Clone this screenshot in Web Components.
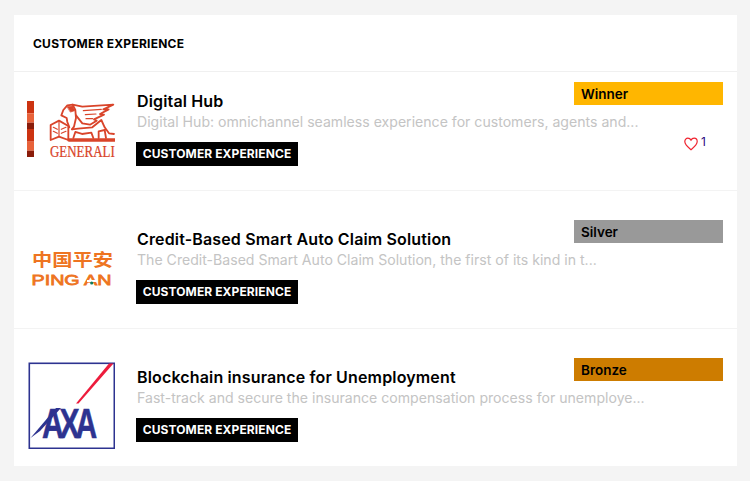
<!DOCTYPE html>
<html><head><meta charset="utf-8"><style>
html,body{margin:0;padding:0;background:#f4f4f4}
body{padding:15px 13px 15px 14px;font-family:Inter,"Liberation Sans",sans-serif}
</style></head><body>
<template id="t-card"><style>
:host{display:block;background:#fff;width:723px}
header{height:57px;box-sizing:border-box;padding:21px 0 0 19px;font:700 12px/16px Inter,"Liberation Sans",sans-serif;letter-spacing:.02em;color:#000;border-bottom:1px solid #f0f0f0}
</style><header><slot name="title"></slot></header><slot></slot></template>

<template id="t-row"><style>
:host{display:flex;position:relative;box-sizing:border-box;height:138px;padding:32px 14px 17px 13px;gap:22px;border-bottom:1px solid #f3f3f3;color:#000}
:host([first]){height:119px;padding-top:13px}
:host([last]){border-bottom:0;height:137px}
.logo{flex:0 0 88px;height:88px}
.body{flex:1;min-width:0;padding-top:6px}
h3{margin:0 0 1px;font:600 16px/20px Inter,"Liberation Sans",sans-serif;letter-spacing:.15px;white-space:nowrap}
p{margin:0 0 10px;font:400 14.1px/20px Inter,"Liberation Sans",sans-serif;color:#c4c4c4;white-space:nowrap;overflow:hidden;height:20px}
.tag{display:inline-block;margin-left:-1px;background:#000;color:#fff;font:700 12px/24px Inter,"Liberation Sans",sans-serif;letter-spacing:.1px;width:162px;height:24px;text-align:center}
.badge{position:absolute;top:10px;right:14px;width:149px;height:23px;box-sizing:border-box;padding-left:7px;font:600 13.5px/24px Inter,"Liberation Sans",sans-serif;background:var(--bc,#ccc)}
:host(:not([first])) .badge{top:29px}
</style><div class="logo"><slot name="logo"></slot></div><div class="body"><h3><slot name="name"></slot></h3><p><slot name="desc"></slot></p><span class="tag"><slot name="tag"></slot></span></div><div class="badge"><slot name="badge"></slot></div><slot name="extra"></slot></template>

<template id="t-like"><style>
:host{position:absolute;left:670px;top:63px;display:flex;align-items:flex-start;gap:3px;color:#2a0a80;font:400 12px/14px Inter,"Liberation Sans",sans-serif}
svg{display:block;margin-top:2px}
</style><svg width="14" height="14" viewBox="0 0 14 14"><path d="M7 12.7C4.4 10.6.8 8 .8 4.6.8 2.6 2.2 1.2 3.9 1.2 5.3 1.2 6.4 2 7 3.1 7.6 2 8.7 1.2 10.1 1.2 11.8 1.2 13.2 2.6 13.2 4.6 13.2 8 9.6 10.6 7 12.7Z" fill="none" stroke="#f0232f" stroke-width="1.2"/></svg><span><slot></slot></span></template>

<aw-card>
<span slot="title">CUSTOMER EXPERIENCE</span>

<aw-row first style="--bc:#ffb600">
<svg slot="logo" width="88" height="88" viewBox="0 0 88 88" style="display:block">
<rect x="0" y="16" width="7" height="12.3" fill="#cc3311"/><rect x="0" y="28.3" width="7" height="9.4" fill="#e8623a"/><rect x="0" y="37.7" width="7" height="6.3" fill="#8a1c0a"/><rect x="0" y="44" width="7" height="12.7" fill="#cc3311"/><rect x="0" y="56.7" width="7" height="9" fill="#e8623a"/><rect x="0" y="65.7" width="7" height="6.3" fill="#8a1c0a"/>
<g transform="translate(-13 5) scale(.3333)" fill="none" stroke="#d9442a" stroke-width="5.5" stroke-linejoin="round" stroke-linecap="round">
<path d="M110 105L135 92 163 108V150L135 140 110 150Z"/><path d="M135 94V140M118 112L130 118M118 124L130 130M142 118L156 112M142 130L156 124" stroke-width="3.5"/>
<path d="M148 60L160 46 176 44 184 60 186 84 180 110 174 118M148 60L142 76 158 84 160 96 166 112" />
<path d="M160 50L176 48 182 62 170 66Z" fill="#d9442a" stroke-width="2"/>
<path d="M176 44L205 50 298 44 268 58 284 58 258 72 270 74 240 88 248 92 228 104 205 100 186 76"/>
<path d="M208 62L262 58M214 74L246 72M216 86L236 86" stroke-width="3.5"/>
<path d="M174 118L192 116 235 112 262 90 272 112 285 130 300 132M178 144L184 126 204 132 232 128 238 144M254 144L254 124 272 120 276 144"/>
<path d="M165 150H303" stroke-width="10"/></g>
<text transform="translate(23 72) scale(.81 1)" font-family="Liberation Serif" font-size="16" fill="#d9442a" stroke="#d9442a" stroke-width=".25">GENERALI</text>
</svg>
<span slot="name">Digital Hub</span>
<span slot="desc">Digital Hub: omnichannel seamless experience for customers, agents and...</span>
<span slot="tag">CUSTOMER EXPERIENCE</span>
<span slot="badge">Winner</span>
<aw-like slot="extra">1</aw-like>
</aw-row>

<aw-row style="--bc:#999999">
<svg slot="logo" width="88" height="88" viewBox="0 0 88 88" style="display:block">
<text transform="translate(5 42.5) scale(1.19 1)" font-family="Noto Sans CJK SC" font-weight="700" font-size="17" fill="#ee7421">中国平安</text>
<text transform="translate(4.5 62) scale(1.29 1)" font-family="Liberation Sans" font-size="15.3" stroke="#ee7421" stroke-width=".8" fill="#ee7421">PING AN</text>
<rect x="60" y="57" width="10" height="2" fill="#fff"/>
<circle cx="64.7" cy="60" r="1.6" fill="#0c7a5c"/>
</svg>
<span slot="name">Credit-Based Smart Auto Claim Solution</span>
<span slot="desc">The Credit-Based Smart Auto Claim Solution, the first of its kind in t...</span>
<span slot="tag">CUSTOMER EXPERIENCE</span>
<span slot="badge">Silver</span>
</aw-row>

<aw-row last style="--bc:#cd7c00">
<svg slot="logo" width="88" height="88" viewBox="0 0 88 88" style="display:block">
<rect x="2.3" y="2.3" width="85" height="85" fill="#fff" stroke="#2d3390" stroke-width="1.6"/>
<path d="M82 2.6H86.5L51.5 42.5H49Z" fill="#ed1c3c"/>
<text transform="translate(15 77) scale(.7 1)" font-family="Liberation Sans" font-weight="700" font-size="43" letter-spacing="-6" fill="#2d3390" stroke="#2d3390" stroke-width=".6">AXA</text>
<path d="M3.5 77L29 47H34L13 70Z" fill="#2d3390"/>
</svg>
<span slot="name">Blockchain insurance for Unemployment</span>
<span slot="desc">Fast-track and secure the insurance compensation process for unemploye...</span>
<span slot="tag">CUSTOMER EXPERIENCE</span>
<span slot="badge">Bronze</span>
</aw-row>
</aw-card>

<script>
function def(name,tpl){customElements.define(name,class extends HTMLElement{constructor(){super();this.attachShadow({mode:'open'}).appendChild(document.getElementById(tpl).content.cloneNode(true));}});}
def('aw-card','t-card');def('aw-row','t-row');def('aw-like','t-like');
</script>
</body></html>
